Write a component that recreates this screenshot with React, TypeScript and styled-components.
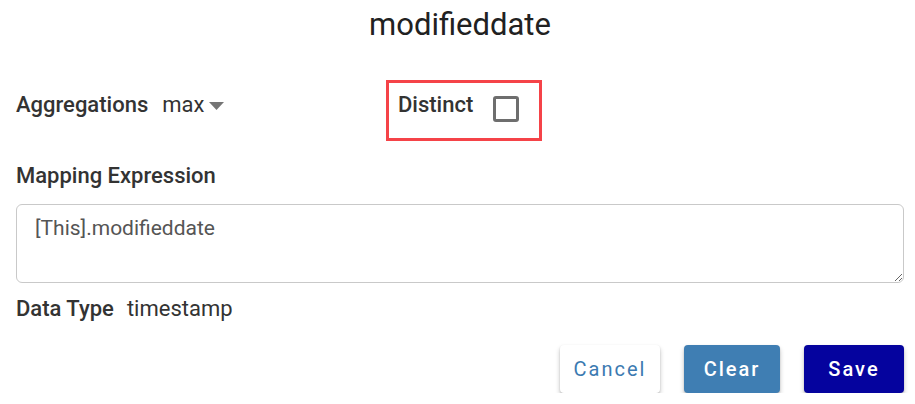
import React from "react";
import styled, { createGlobalStyle } from "styled-components";

const Global = createGlobalStyle`
  html, body { margin: 0; padding: 0; background: #fff; }
  body { font-family: Roboto, "Liberation Sans", Arial, sans-serif; }
  * { box-sizing: border-box; }
`;

const Page = styled.div`
  width: 915px;
  padding: 7px 11px 0 16px;
  display: flex;
  flex-direction: column;
`;

const Title = styled.h1`
  margin: 0;
  font-size: 31px;
  line-height: 36px;
  font-weight: 400;
  color: #212121;
  text-align: center;
`;

const TopRow = styled.div`
  margin-top: 37px;
  display: grid;
  grid-template-columns: 370px auto 1fr;
  align-items: baseline;
`;

const Field = styled.div`
  display: flex;
  align-items: baseline;
  gap: 14px;
`;

const Label = styled.span`
  font-size: 22px;
  line-height: 25px;
  font-weight: 500;
  color: #333;
`;

const Value = styled.span`
  font-size: 22px;
  line-height: 25px;
  font-weight: 400;
  color: #333;
`;

const Select = styled.span`
  display: inline-flex;
  align-items: baseline;
  gap: 5px;
`;

const Highlight = styled.div`
  display: flex;
  align-items: flex-start;
  gap: 20px;
  border: 3px solid #f54348;
  padding: 9px 20px 16px 9px;
`;

const Checkbox = styled.span`
  margin-top: 4px;
  width: 26px;
  height: 26px;
  border: 3px solid #6e6e6e;
  border-radius: 3px;
  background: #fff;
`;

const SectionLabel = styled(Label)`
  display: block;
  margin-top: 22px;
`;

const TextArea = styled.textarea`
  margin-top: 16px;
  width: 888px;
  height: 79px;
  border: 1px solid #c9c9c9;
  border-radius: 6px;
  padding: 11px 18px;
  font-family: Roboto, "Liberation Sans", Arial, sans-serif;
  font-size: 21px;
  line-height: 24px;
  color: #555;
  outline: none;
  resize: both;
`;

const InfoRow = styled.div`
  margin-top: 13px;
  display: flex;
  align-items: baseline;
  gap: 13px;
`;

const Actions = styled.div`
  margin-top: 24px;
  display: flex;
  justify-content: flex-end;
  gap: 24px;
`;

const Button = styled.button<{ $variant: "outline" | "light" | "dark"; $w: number }>`
  width: ${(p) => p.$w}px;
  height: 48px;
  border: none;
  border-radius: 4px;
  font-family: Roboto, "Liberation Sans", Arial, sans-serif;
  font-size: 20px;
  letter-spacing: 2px;
  font-weight: ${(p) => (p.$variant === "outline" ? 400 : 500)};
  cursor: pointer;
  box-shadow: 0 3px 5px rgba(0, 0, 0, 0.22), 0 1px 2px rgba(0, 0, 0, 0.14);
  background: ${(p) =>
    p.$variant === "outline" ? "#fff" : p.$variant === "light" ? "#3f7eb3" : "#05039e"};
  color: ${(p) => (p.$variant === "outline" ? "#3c7ab1" : "#fff")};
`;

const Caret = () => (
  <svg width="15" height="8" viewBox="0 0 15 8" style={{ alignSelf: "center", marginTop: 2 }}>
    <path d="M0 0 L15 0 L7.5 8 Z" fill="#757575" />
  </svg>
);

export default function App() {
  return (
    <>
      <Global />
      <Page>
        <Title>modifieddate</Title>
        <TopRow>
          <Field>
            <Label>Aggregations</Label>
            <Select>
              <Value>max</Value>
              <Caret />
            </Select>
          </Field>
          <Highlight>
            <Label>Distinct</Label>
            <Checkbox />
          </Highlight>
        </TopRow>
        <SectionLabel>Mapping Expression</SectionLabel>
        <TextArea defaultValue="[This].modifieddate" />
        <InfoRow>
          <Label>Data Type</Label>
          <Value>timestamp</Value>
        </InfoRow>
        <Actions>
          <Button $variant="outline" $w={100}>Cancel</Button>
          <Button $variant="light" $w={96}>Clear</Button>
          <Button $variant="dark" $w={100}>Save</Button>
        </Actions>
      </Page>
    </>
  );
}
